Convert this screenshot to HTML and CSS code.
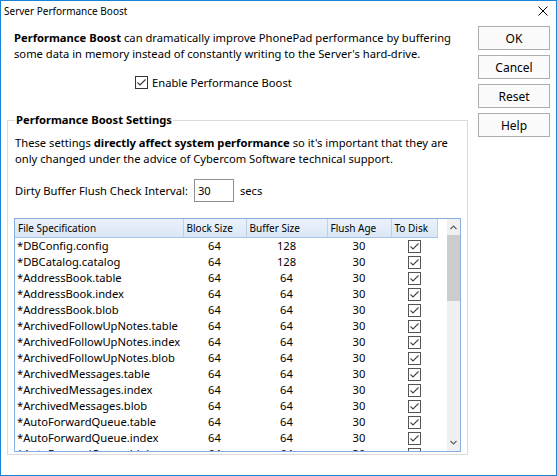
FILE: index.html
```html
<!DOCTYPE html>
<html lang="en">
<head>
    <meta charset="UTF-8">
    <title>Server Performance Boost</title>
    <link rel="stylesheet" href="styles.css">
</head>
<body>
    <div class="window">
        <div class="titlebar">
            <span class="title">Server Performance Boost</span>
            <svg class="close" width="10" height="10" viewBox="0 0 10 10"><path d="M0.5 0.5 L9.5 9.5 M9.5 0.5 L0.5 9.5" stroke="#000" stroke-width="1"/></svg>
        </div>

        <div class="dialog">
            <div class="main">
                <p class="intro"><b>Performance Boost</b> can dramatically improve PhonePad performance by buffering some data in memory instead of constantly writing to the Server's hard-drive.</p>

                <label class="check-row">
                    <svg class="cb" width="13" height="13" viewBox="0 0 13 13"><rect x="0.5" y="0.5" width="12" height="12" fill="#fff" stroke="#333"/><path d="M2.5 6.5 L5 9 L10.5 3.5" fill="none" stroke="#333" stroke-width="1.1"/></svg>
                    Enable Performance Boost
                </label>

                <fieldset class="group">
                    <legend>Performance Boost Settings</legend>
                    <p class="warn">These settings <b>directly affect system performance</b> so it's important that they are only changed under the advice of Cybercom Software technical support.</p>

                    <div class="interval">
                        <span>Dirty Buffer Flush Check Interval:</span>
                        <span class="input">30</span>
                        <span>secs</span>
                    </div>

                    <div class="list">
                        <div class="list-body">
                            <table>
                                <colgroup>
                                    <col style="width:168px">
                                    <col style="width:63px">
                                    <col style="width:81px">
                                    <col style="width:64px">
                                    <col style="width:46px">
                                </colgroup>
                                <thead>
                                    <tr>
                                        <th>File Specification</th>
                                        <th>Block Size</th>
                                        <th>Buffer Size</th>
                                        <th>Flush Age</th>
                                        <th>To Disk</th>
                                    </tr>
                                </thead>
                                <tbody id="rows"></tbody>
                            </table>
                        </div>
                        <div class="scrollbar">
                            <svg class="arrow" width="7" height="5" viewBox="0 0 7 5"><path d="M0.5 4 L3.5 1 L6.5 4" fill="none" stroke="#606060" stroke-width="1.2"/></svg>
                            <div class="track"><div class="thumb"></div></div>
                            <svg class="arrow" width="7" height="5" viewBox="0 0 7 5"><path d="M0.5 1 L3.5 4 L6.5 1" fill="none" stroke="#606060" stroke-width="1.2"/></svg>
                        </div>
                    </div>
                </fieldset>
            </div>

            <div class="side">
                <button>OK</button>
                <button>Cancel</button>
                <button>Reset</button>
                <button>Help</button>
            </div>
        </div>
    </div>

    <script>
        // fayl ro'yxati
        const files = [
            ['*DBConfig.config', 64, 128, 30],
            ['*DBCatalog.catalog', 64, 128, 30],
            ['*AddressBook.table', 64, 64, 30],
            ['*AddressBook.index', 64, 64, 30],
            ['*AddressBook.blob', 64, 64, 30],
            ['*ArchivedFollowUpNotes.table', 64, 64, 30],
            ['*ArchivedFollowUpNotes.index', 64, 64, 30],
            ['*ArchivedFollowUpNotes.blob', 64, 64, 30],
            ['*ArchivedMessages.table', 64, 64, 30],
            ['*ArchivedMessages.index', 64, 64, 30],
            ['*ArchivedMessages.blob', 64, 64, 30],
            ['*AutoForwardQueue.table', 64, 64, 30],
            ['*AutoForwardQueue.index', 64, 64, 30],
            ['*AutoForwardQueue.blob', 64, 64, 30]
        ];

        const box = '<svg width="13" height="13" viewBox="0 0 13 13"><rect x="0.5" y="0.5" width="12" height="12" fill="#fff" stroke="#555"/><path d="M2.5 6.5 L5 9 L10.5 3.5" fill="none" stroke="#444" stroke-width="1.1"/></svg>';

        let html = '';
        files.forEach(function(f) {
            html += '<tr><td>' + f[0] + '</td><td class="num">' + f[1] + '</td><td class="num">' + f[2] +
                    '</td><td class="num">' + f[3] + '</td><td class="num chk">' + box + '</td></tr>';
        });
        document.getElementById('rows').innerHTML = html;
    </script>
</body>
</html>
```

FILE: styles.css
```css
* {
    margin: 0;
    padding: 0;
    box-sizing: border-box;
}

body {
    font-family: 'Noto Sans', 'DejaVu Sans', sans-serif;
    font-size: 11.2px;
    color: #000;
    background: #fff;
}

.window {
    width: 557px;
    height: 476px;
    border: 1px solid #1883d7;
    background: #fff;
    overflow: hidden;
}

.titlebar {
    height: 20px;
    padding: 0 8px 0 3px;
    display: flex;
    align-items: center;
    justify-content: space-between;
}

.title {
    font-size: 10px;
}

.dialog {
    display: flex;
}

.main {
    width: 467px;
    padding-left: 6px;
}

.intro {
    margin-top: 9px;
    padding-left: 7px;
    line-height: 16px;
}

.check-row {
    margin-top: 12px;
    padding-left: 128px;
    height: 16px;
    display: flex;
    align-items: center;
    gap: 4px;
}

.group {
    margin-top: 22px;
    border: 1px solid #dcdcdc;
    padding: 0 6px 2px 7px;
}

.group legend {
    font-weight: bold;
    line-height: 16px;
    padding: 0 1px;
    margin-left: 0;
}

.warn {
    margin-top: 7px;
    line-height: 16px;
}

.interval {
    margin-top: 12px;
    display: flex;
    align-items: center;
    gap: 6px;
}

.input {
    width: 40px;
    height: 23px;
    border: 1px solid #8f8f8f;
    padding: 3px 0 0 3px;
    line-height: 16px;
}

.list {
    margin-top: 16px;
    margin-left: -1px;
    height: 234px;
    border: 1px solid #86aee0;
    display: flex;
    overflow: hidden;
}

.list-body {
    flex: 1;
    overflow: hidden;
}

table {
    border-collapse: collapse;
    table-layout: fixed;
    width: 422px;
}

th {
    height: 18px;
    font-weight: normal;
    font-size: 10px;
    text-align: left;
    padding-left: 3px;
    background: linear-gradient(#eaf1fb, #dbe7f6);
    border-right: 1px solid #bcd0ea;
    border-bottom: 1px solid #a9c3e6;
}

td {
    height: 16px;
    line-height: 16px;
    padding-left: 2px;
    white-space: nowrap;
}

td.num {
    text-align: center;
    padding-left: 0;
}

td.chk svg {
    display: block;
    margin: 1px auto 0;
}

.scrollbar {
    width: 13px;
    background: #f0f0f0;
    display: flex;
    flex-direction: column;
    align-items: center;
}

.arrow {
    margin: 6px 0;
}

.track {
    flex: 1;
    width: 100%;
}

.thumb {
    height: 66px;
    margin-top: -1px;
    background: #cdcdcd;
}

.side {
    margin-left: 10px;
    padding-top: 5px;
    display: flex;
    flex-direction: column;
    gap: 5px;
}

.side button {
    width: 72px;
    height: 24px;
    font-family: inherit;
    font-size: 12px;
    background: #fbfbfb;
    border: 1px solid #adadad;
}
```
